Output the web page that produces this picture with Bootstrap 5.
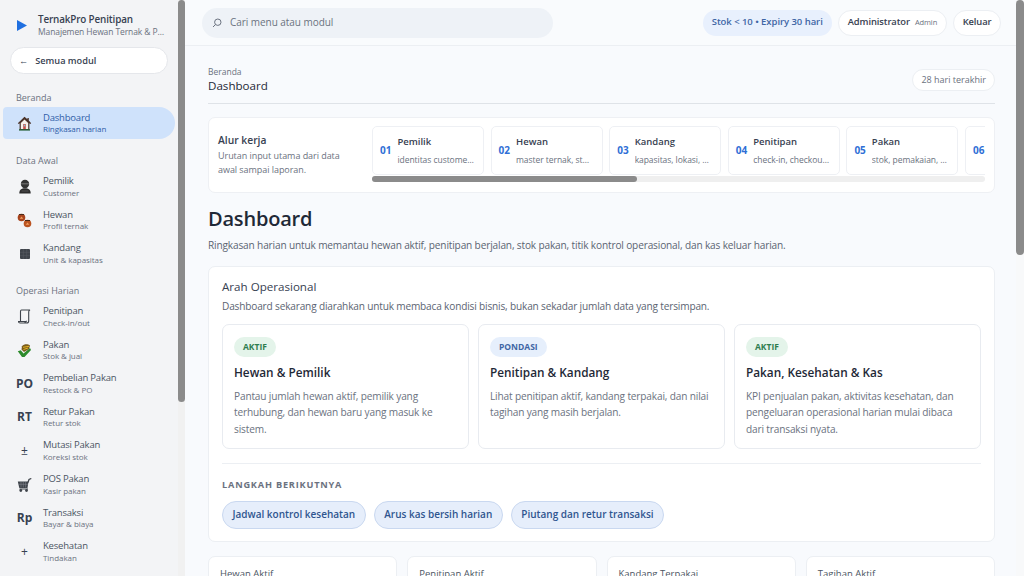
<!DOCTYPE html>
<html lang="id">
<head>
  <meta charset="UTF-8">
  <meta name="viewport" content="width=device-width, initial-scale=1">
  <title>TernakPro Penitipan</title>
  <link href="https://cdn.jsdelivr.net/npm/bootstrap@5.3.0/dist/css/bootstrap.min.css" rel="stylesheet">
  <style>
    html, body { height: 100%; overflow: hidden; }
    body { font-family: "Open Sans", "Noto Sans", sans-serif; font-size: 11px; color: #1f2937; background: #f8fafd; }

    /* scrollbars drawn by hand */
    .rail { width: 8px; flex: none; height: 100vh; background: #f8f9fa; }
    .rail-thumb { background: #8b8b8b; border-radius: 4px; }

    /* sidebar */
    .side { width: 185px; height: 100vh; flex: none; background: #f3f4f6; }
    .side-inner { flex: 1; min-width: 0; overflow: hidden; }
    .side .rail { width: 7px; background: #f1f1f1; }
    .brand { height: 46px; padding: 5px 0 0 16px; gap: 11px; }
    .brand-name { font-size: 9.9px; font-weight: 600; color: #374151; line-height: 13px; letter-spacing: -.15px; }
    .brand-sub { font-size: 8.5px; color: #6b7280; line-height: 12px; width: 128px; letter-spacing: -.1px; }
    .back-pill { margin: 1px 0 0 10px; height: 27px; width: 158px; padding-left: 8px; gap: 7px; background: #fff; border: 1px solid #e5e7eb; border-radius: 14px; font-size: 9.2px; font-weight: 600; color: #374151; }
    .nav-head { font-size: 9px; font-weight: 500; color: #6b7280; padding-left: 16px; line-height: 12px; }
    .nav-row { height: 33.6px; padding-left: 16px; gap: 10px; color: #4b5563; text-decoration: none; white-space: nowrap; }
    .nav-row.is-on { height: 32px; margin-left: 3px; padding-left: 13px; width: 172px; background: #cfe2fb; border-radius: 4px 16px 16px 4px; }
    .nav-ico { width: 17px; flex: none; text-align: center; font-size: 12px; font-weight: 700; color: #374151; line-height: 1; }
    .nav-ico svg { display: block; margin: 0 auto; }
    .nav-ico-thin { font-weight: 400; font-size: 12px; }
    .nav-t { font-size: 9.5px; line-height: 11.5px; color: #4b5563; letter-spacing: -.2px; }
    .nav-s { font-size: 8px; line-height: 11.5px; color: #6b7280; letter-spacing: -.05px; }
    .is-on .nav-t { color: #2f5ea8; font-weight: 500; }
    .is-on .nav-s { color: #2f5ea8; }

    /* main column */
    .main-col { flex: 1; min-width: 0; height: 100vh; overflow: hidden; background: #f8fafd; }
    .topbar { height: 46px; padding: 0 15px 0 17px; background: #f9fbfd; border-bottom: 1px solid #eceff3; }
    .search-box { width: 351px; height: 30px; padding-left: 10px; gap: 8px; background: #eef2f7; border-radius: 15px; font-size: 10px; color: #6b7280; letter-spacing: -.05px; }
    .top-pills { gap: 6.5px; }
    .pill-stock { height: 26px; padding: 0 9px; background: #e8f0fd; border-radius: 13px; font-size: 9.5px; font-weight: 600; color: #3f66a5; letter-spacing: -.05px; }
    .pill-user { height: 26px; padding: 0 8.5px; gap: 5px; background: #fff; border: 1px solid #eceff3; border-radius: 13px; font-size: 9.4px; font-weight: 600; color: #374151; letter-spacing: -.1px; }
    .pill-user small { font-size: 7.5px; font-weight: 400; color: #6b7280; }
    .body-wrap { padding: 20px 21px 0 23px; }
    .crumb { font-size: 8.5px; color: #6b7280; line-height: 12px; }
    .crumb-title { font-size: 11.6px; font-weight: 500; color: #1f2937; line-height: 15px; }
    .range-pill { height: 22px; padding: 0 8px; background: #fff; border: 1px solid #eceff3; border-radius: 11px; font-size: 9px; color: #6b7280; }
    .head-rule { margin-top: 10px; border-bottom: 1px solid #dfe3e8; }

    .flow-box { margin-top: 13px; height: 76px; padding: 8px 9px 0; background: #fff; border: 1px solid #eef0f4; border-radius: 7px; }
    .flow-intro { width: 154px; flex: none; padding: 7px 22px 0 0; }
    .flow-intro b { display: block; font-size: 10.3px; font-weight: 600; color: #374151; line-height: 14px; }
    .flow-intro span { display: block; font-size: 9px; line-height: 14px; color: #6b7280; margin-top: 2px; letter-spacing: -.05px; }
    .flow-col { flex: 1; min-width: 0; }
    .flow-clip { overflow: hidden; height: 49px; gap: 6.6px; }
    .flow-step { flex: 0 0 112px; min-width: 0; height: 49px; padding: 0 8px 0 7px; gap: 6px; background: #fff; border: 1px solid #eef0f4; border-radius: 5px; }
    .flow-no { font-size: 10px; font-weight: 700; color: #2f6fd6; }
    .flow-txt { min-width: 0; }
    .flow-name { font-size: 9.5px; font-weight: 600; color: #374151; line-height: 13px; }
    .flow-sub { font-size: 8.5px; color: #6b7280; line-height: 13px; margin-top: 4.5px; white-space: nowrap; overflow: hidden; text-overflow: ellipsis; letter-spacing: -.05px; }
    .flow-track { margin-top: 1px; height: 6px; background: #efefef; border-radius: 3px; }
    .flow-thumb { height: 6px; background: #8b8b8b; border-radius: 3px; }

    .page-title { margin: 12px 0 0; font-size: 20px; font-weight: 600; color: #1f2937; line-height: 28px; letter-spacing: -.2px; }
    .page-sub { margin: 5px 0 0; font-size: 10.1px; line-height: 15px; color: #5b6472; letter-spacing: -.15px; }

    .dir-box { margin-top: 13px; height: 276px; padding: 12px 13px 0; background: #fff; border: 1px solid #eceff3; border-radius: 7px; }
    .dir-title { font-size: 11.6px; font-weight: 500; color: #374151; line-height: 16px; }
    .dir-sub { font-size: 10.1px; color: #5b6472; line-height: 15px; margin-top: 4px; letter-spacing: -.17px; }
    .dir-grid { margin-top: 9.5px; gap: 9px; }
    .dir-card { flex: 1 1 0; height: 125px; padding: 12px 12px 0 11px; background: #fff; border: 1px solid #e8ebf0; border-radius: 7px; }
    .tag { display: inline-block; height: 20px; line-height: 20px; padding: 0 9px; border-radius: 10px; font-size: 8.5px; font-weight: 700; }
    .tag-green { background: #e4f4ea; color: #2f7d4f; }
    .tag-blue { background: #e6effc; color: #3f66a5; }
    .dir-card h3 { margin: 6px 0 0; font-size: 11.8px; font-weight: 600; color: #1f2937; line-height: 18px; }
    .dir-card p { margin: 7px 0 0; font-size: 10.1px; color: #6b7280; line-height: 16.5px; letter-spacing: -.15px; }
    .dir-rule { margin-top: 14px; border-top: 1px solid #eceff3; }
    .next-head { margin-top: 14px; font-size: 9.2px; font-weight: 700; letter-spacing: .8px; color: #6b7280; line-height: 14px; }
    .chip-row { margin-top: 9px; gap: 8px; }
    .chip-next { height: 28px; padding: 0 9.5px; background: #e6eefb; border: 1px solid #c9d8f0; border-radius: 14px; font-size: 10px; font-weight: 600; color: #2f558f; }

    .kpi-row { margin-top: 14px; gap: 10px; }
    .kpi-box { flex: 1 1 0; height: 40px; padding: 10px 11px; background: #fff; border: 1px solid #eceff3; border-radius: 7px; font-size: 9.5px; line-height: 14px; color: #4b5563; }
  </style>
</head>
<body>
  <div class="d-flex">
    <!-- Sidebar -->
    <aside class="side d-flex">
      <div class="side-inner">
        <div class="brand d-flex align-items-center">
          <svg width="11" height="11" viewBox="0 0 11 11"><path d="M1 0L11 5.5L1 11Z" fill="#1f6fe0"/></svg>
          <div>
            <div class="brand-name">TernakPro Penitipan</div>
            <div class="brand-sub text-truncate">Manajemen Hewan Ternak &amp; Penitipan</div>
          </div>
        </div>
        <div class="back-pill d-flex align-items-center"><span>&larr;</span><span>Semua modul</span></div>

        <div class="nav-head" style="margin-top:18px">Beranda</div>
        <a class="nav-row is-on d-flex align-items-center" style="margin-top:3px" href="#">
          <span class="nav-ico"><svg width="15" height="15" viewBox="0 0 15 15"><path d="M7.5 .8L.8 7.2l1 .8.8-.7V14h9.800V7.300l.8.7 1-.8L11.800 4.600V2h-1.400v1.300z" fill="#4a3228"/><path d="M3.800 7L7.500 3.400 11.200 7v6H3.800z" fill="#f6f1ea"/><rect x="6.200" y="8" width="2.600" height="5" fill="#c9504a"/><rect x="6.800" y="8.600" width="1.400" height="1.800" fill="#7cc4d8"/><path d="M2 13.200h11v1.400H2z" fill="#27613a"/></svg></span>
          <span><div class="nav-t">Dashboard</div><div class="nav-s">Ringkasan harian</div></span>
        </a>

        <div class="nav-head" style="margin-top:16px">Data Awal</div>
        <a class="nav-row d-flex align-items-center" style="margin-top:3px" href="#">
          <span class="nav-ico"><svg width="14" height="15" viewBox="0 0 14 15"><circle cx="7" cy="5" r="4.200" fill="#333"/><path d="M3 4.200h8v1.200H3z" fill="#6e6e6e"/><path d="M1.300 14.500c0-3.800 2-5.300 5.700-5.300s5.700 1.500 5.700 5.300z" fill="#2c2c2c"/><path d="M3.500 12h7" stroke="#666" stroke-width=".7"/></svg></span>
          <span><div class="nav-t">Pemilik</div><div class="nav-s">Customer</div></span>
        </a>
        <a class="nav-row d-flex align-items-center" href="#">
          <span class="nav-ico"><svg width="15" height="15" viewBox="0 0 15 15"><circle cx="4.500" cy="4.500" r="3.800" fill="#a8431c"/><circle cx="10.500" cy="10.500" r="3.800" fill="#bb5320"/><path d="M2.700 5.800l1.800-2.300 1.800 2.300zM8.700 11.800l1.800-2.300 1.800 2.300z" fill="#f0a060"/><path d="M2 1.500h5M8 7.500h5" stroke="#4a2a18" stroke-width="1"/></svg></span>
          <span><div class="nav-t">Hewan</div><div class="nav-s">Profil ternak</div></span>
        </a>
        <a class="nav-row d-flex align-items-center" href="#">
          <span class="nav-ico"><svg width="10" height="10" viewBox="0 0 10 10"><rect width="10" height="10" rx="1" fill="#3f444b"/><path d="M3.300 0v10M6.700 0v10M0 3.300h10M0 6.700h10" stroke="#5a5f66" stroke-width=".5"/></svg></span>
          <span><div class="nav-t">Kandang</div><div class="nav-s">Unit &amp; kapasitas</div></span>
        </a>

        <div class="nav-head" style="margin-top:14px">Operasi Harian</div>
        <a class="nav-row d-flex align-items-center" style="margin-top:3px" href="#">
          <span class="nav-ico"><svg width="13" height="15" viewBox="0 0 13 15"><path d="M3.500 1h8.500c-.8.300-1.300.900-1.300 1.800V12c0 1.200-.8 2-2 2H2c-1 0-1.500-.7-1.500-1.500h6.500V13c.8 0 1.500-.5 1.500-1.300M3.500 1C2.700 1 2.500 1.700 2.500 2.500v10" fill="#f7f7f7" stroke="#3f444b" stroke-width="1.100"/></svg></span>
          <span><div class="nav-t">Penitipan</div><div class="nav-s">Check-in/out</div></span>
        </a>
        <a class="nav-row d-flex align-items-center" href="#">
          <span class="nav-ico"><svg width="15" height="15" viewBox="0 0 15 15"><path d="M.8 8.200l3-1 2.700 3.300L13 5l1 2-6.500 7H5z" fill="#2c8a2c"/><path d="M5 3.200C7 .8 11 .8 13 2.500l-1 3.500-5 3-2.500-2.500z" fill="#7a5c1c"/><path d="M6 4.300l6-1M6.500 6.500l4.500-1.500" stroke="#e3b421" stroke-width="1"/></svg></span>
          <span><div class="nav-t">Pakan</div><div class="nav-s">Stok &amp; jual</div></span>
        </a>
        <a class="nav-row d-flex align-items-center" href="#">
          <span class="nav-ico">PO</span>
          <span><div class="nav-t">Pembelian Pakan</div><div class="nav-s">Restock &amp; PO</div></span>
        </a>
        <a class="nav-row d-flex align-items-center" href="#">
          <span class="nav-ico">RT</span>
          <span><div class="nav-t">Retur Pakan</div><div class="nav-s">Retur stok</div></span>
        </a>
        <a class="nav-row d-flex align-items-center" href="#">
          <span class="nav-ico nav-ico-thin">&plusmn;</span>
          <span><div class="nav-t">Mutasi Pakan</div><div class="nav-s">Koreksi stok</div></span>
        </a>
        <a class="nav-row d-flex align-items-center" href="#">
          <span class="nav-ico"><svg width="15" height="14" viewBox="0 0 15 14"><path d="M.8 3.500h10.700l-1 6.500H2.300z" fill="#3f444b"/><path d="M11 4.500l1-3 2.300-1" fill="none" stroke="#3f444b" stroke-width="1.300"/><path d="M2.500 11h8.500" stroke="#3f444b" stroke-width="1"/><circle cx="3.800" cy="12.500" r="1.400" fill="#3f444b"/><circle cx="9.500" cy="12.500" r="1.400" fill="#3f444b"/><path d="M4 4v5.500M6.300 4v5.500M8.600 4v5.500M1.500 6.300h9.500" stroke="#8a8f96" stroke-width=".5"/></svg></span>
          <span><div class="nav-t">POS Pakan</div><div class="nav-s">Kasir pakan</div></span>
        </a>
        <a class="nav-row d-flex align-items-center" href="#">
          <span class="nav-ico">Rp</span>
          <span><div class="nav-t">Transaksi</div><div class="nav-s">Bayar &amp; biaya</div></span>
        </a>
        <a class="nav-row d-flex align-items-center" href="#">
          <span class="nav-ico nav-ico-thin">+</span>
          <span><div class="nav-t">Kesehatan</div><div class="nav-s">Tindakan</div></span>
        </a>
      </div>
      <div class="rail"><div class="rail-thumb" style="height:402px"></div></div>
    </aside>

    <!-- Main -->
    <div class="main-col">
      <header class="topbar d-flex align-items-center">
        <div class="search-box d-flex align-items-center">
          <svg width="10" height="10" viewBox="0 0 10 10" fill="none" stroke="#6b7280" stroke-width="1"><circle cx="5.800" cy="4.200" r="3.200"/><path d="M3.500 6.500L1 9"/></svg>
          <span>Cari menu atau modul</span>
        </div>
        <div class="top-pills ms-auto d-flex align-items-center">
          <span class="pill-stock d-flex align-items-center">Stok &lt; 10 &bull; Expiry 30 hari</span>
          <span class="pill-user d-flex align-items-center">Administrator <small>Admin</small></span>
          <span class="pill-user d-flex align-items-center">Keluar</span>
        </div>
      </header>

      <main class="body-wrap">
        <div class="d-flex justify-content-between align-items-center">
          <div>
            <div class="crumb">Beranda</div>
            <div class="crumb-title">Dashboard</div>
          </div>
          <span class="range-pill d-flex align-items-center">28 hari terakhir</span>
        </div>
        <div class="head-rule"></div>

        <section class="flow-box d-flex">
          <div class="flow-intro">
            <b>Alur kerja</b>
            <span>Urutan input utama dari data awal sampai laporan.</span>
          </div>
          <div class="flow-col">
            <div class="flow-clip d-flex" id="flowSteps"></div>
            <div class="flow-track"><div class="flow-thumb" style="width:43.2%"></div></div>
          </div>
        </section>

        <h1 class="page-title">Dashboard</h1>
        <p class="page-sub">Ringkasan harian untuk memantau hewan aktif, penitipan berjalan, stok pakan, titik kontrol operasional, dan kas keluar harian.</p>

        <section class="dir-box">
          <div class="dir-title">Arah Operasional</div>
          <div class="dir-sub">Dashboard sekarang diarahkan untuk membaca kondisi bisnis, bukan sekadar jumlah data yang tersimpan.</div>
          <div class="dir-grid d-flex">
            <div class="dir-card">
              <span class="tag tag-green">AKTIF</span>
              <h3>Hewan &amp; Pemilik</h3>
              <p>Pantau jumlah hewan aktif, pemilik yang terhubung, dan hewan baru yang masuk ke sistem.</p>
            </div>
            <div class="dir-card">
              <span class="tag tag-blue">PONDASI</span>
              <h3>Penitipan &amp; Kandang</h3>
              <p>Lihat penitipan aktif, kandang terpakai, dan nilai tagihan yang masih berjalan.</p>
            </div>
            <div class="dir-card">
              <span class="tag tag-green">AKTIF</span>
              <h3>Pakan, Kesehatan &amp; Kas</h3>
              <p>KPI penjualan pakan, aktivitas kesehatan, dan pengeluaran operasional harian mulai dibaca dari transaksi nyata.</p>
            </div>
          </div>
          <div class="dir-rule"></div>
          <div class="next-head">LANGKAH BERIKUTNYA</div>
          <div class="chip-row d-flex">
            <span class="chip-next d-flex align-items-center">Jadwal kontrol kesehatan</span>
            <span class="chip-next d-flex align-items-center">Arus kas bersih harian</span>
            <span class="chip-next d-flex align-items-center">Piutang dan retur transaksi</span>
          </div>
        </section>

        <section class="kpi-row d-flex">
          <div class="kpi-box">Hewan Aktif</div>
          <div class="kpi-box">Penitipan Aktif</div>
          <div class="kpi-box">Kandang Terpakai</div>
          <div class="kpi-box">Tagihan Aktif</div>
        </section>
      </main>
    </div>
    <div class="rail"><div class="rail-thumb" style="height:255px"></div></div>
  </div>

  <script src="https://cdn.jsdelivr.net/npm/bootstrap@5.3.0/dist/js/bootstrap.bundle.min.js"></script>
  <script>
    const steps = [
      ["Pemilik", "identitas customer utama"],
      ["Hewan", "master ternak, status aktif"],
      ["Kandang", "kapasitas, lokasi, masa inap"],
      ["Penitipan", "check-in, checkout harian"],
      ["Pakan", "stok, pemakaian, penjualan"],
      null
    ];
    const flow = document.getElementById("flowSteps");
    steps.forEach((s, i) => {
      const no = String(i + 1).padStart(2, "0");
      const txt = s ? `<div class="flow-txt"><div class="flow-name">${s[0]}</div><div class="flow-sub">${s[1]}</div></div>` : "";
      flow.innerHTML += `<div class="flow-step d-flex align-items-center"><span class="flow-no">${no}</span>${txt}</div>`;
    });
  </script>
</body>
</html>
